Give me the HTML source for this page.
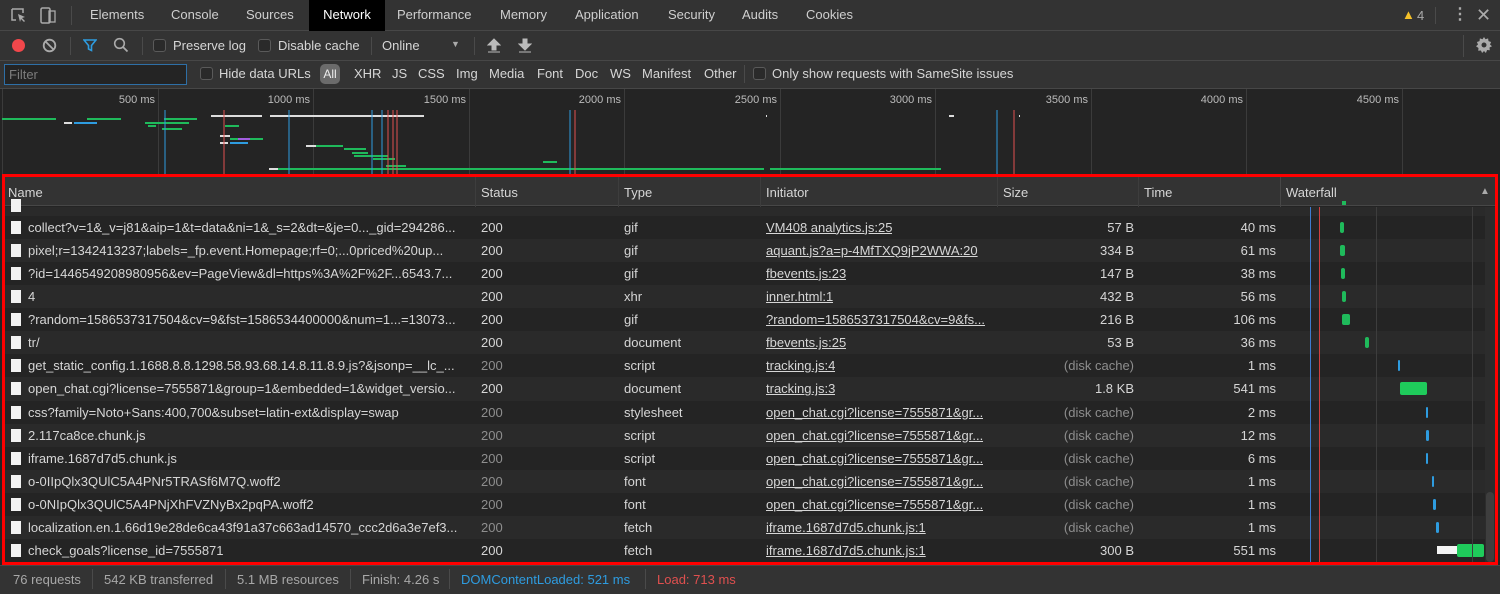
<!DOCTYPE html>
<html><head><meta charset="utf-8"><style>
*{box-sizing:border-box;margin:0;padding:0}
body{width:1500px;height:594px;background:#242424;font-family:"Liberation Sans",sans-serif;font-size:13px;color:#d6d6d6;position:relative;overflow:hidden}
.a{position:absolute;white-space:nowrap}
.bar{position:absolute;left:0;width:1500px;background:#333;border-bottom:1px solid #474747}
.tab{position:absolute;top:0;height:30px;line-height:30px;color:#cfcfcf}
.cb{position:absolute;width:13px;height:13px;border:1px solid #5a5a5a;border-radius:3px;background:#2a2a2a}
.sep{position:absolute;width:1px;background:#4a4a4a}
#tbl{position:absolute;left:2px;top:174px;width:1496px;height:391px;border:3px solid #f00;overflow:hidden;background:#242424}
.row{position:absolute;left:0;width:1490px;height:23.13px;line-height:23px}
.row span{position:absolute;white-space:nowrap;overflow:hidden}
.ic{position:absolute;left:6px;top:5px;width:10px;height:13px;background:#f2f2f2}
.u{text-decoration:underline;color:#d6d6d6}
.g{color:#8e8e8e}
.vl{position:absolute;width:1px;top:0;bottom:0;background:#3d3d3d}
</style></head><body>
<div class="bar" style="top:0;height:31px;background:#333"></div>
<svg class="a" style="left:10px;top:7px" width="48" height="18" viewBox="0 0 48 18"><path d="M2 2h11v4M2 2v11h4" stroke="#aaa" fill="none" stroke-width="1.5"/><path d="M8 7l7 3-3 1 3 3-1 1-3-3-1 3z" fill="#aaa"/><rect x="31" y="1" width="9" height="15" rx="1.5" stroke="#aaa" fill="none" stroke-width="1.5"/><rect x="39" y="4" width="6" height="11" stroke="#aaa" fill="none" stroke-width="1.3"/></svg>
<div class="sep" style="left:71px;top:6px;height:19px"></div>
<div class="tab" style="left:90px">Elements</div>
<div class="tab" style="left:171px">Console</div>
<div class="tab" style="left:246px">Sources</div>
<div class="tab" style="left:309px;width:76px;background:#000;color:#fff;text-align:center;height:31px">Network</div>
<div class="tab" style="left:397px">Performance</div>
<div class="tab" style="left:500px">Memory</div>
<div class="tab" style="left:575px">Application</div>
<div class="tab" style="left:668px">Security</div>
<div class="tab" style="left:742px">Audits</div>
<div class="tab" style="left:806px">Cookies</div>
<div class="a" style="left:1402px;top:7px;color:#f4c029;font-size:13px">▲</div>
<div class="a" style="left:1417px;top:8px;color:#aaa">4</div>
<div class="sep" style="left:1435px;top:7px;height:17px"></div>
<div class="a" style="left:1452px;top:6px;color:#aaa;font-size:16px;line-height:18px;font-weight:bold">⋮</div>
<div class="a" style="left:1476px;top:5px;color:#aaa;font-size:18px">✕</div>
<div class="bar" style="top:31px;height:30px"></div>
<div class="a" style="left:12px;top:39px;width:13px;height:13px;border-radius:50%;background:#f2474b"></div>
<svg class="a" style="left:42px;top:38px" width="15" height="15"><circle cx="7.5" cy="7.5" r="5.8" stroke="#aaa" stroke-width="1.8" fill="none"/><path d="M3.5 3.5l8 8" stroke="#aaa" stroke-width="1.8"/></svg>
<div class="sep" style="left:70px;top:37px;height:18px"></div>
<svg class="a" style="left:83px;top:39px" width="14" height="13"><path d="M1 1h12l-4.5 5.5v5l-3-1.5v-3.5z" stroke="#2e9ce0" stroke-width="1.6" fill="none"/></svg>
<svg class="a" style="left:113px;top:37px" width="16" height="16"><circle cx="6.5" cy="6.5" r="4.8" stroke="#aaa" stroke-width="1.6" fill="none"/><path d="M10 10l4.5 4.5" stroke="#aaa" stroke-width="1.8"/></svg>
<div class="sep" style="left:142px;top:37px;height:18px"></div>
<div class="cb" style="left:153px;top:39px"></div><div class="a" style="left:173px;top:38px">Preserve log</div>
<div class="cb" style="left:258px;top:39px"></div><div class="a" style="left:278px;top:38px">Disable cache</div>
<div class="sep" style="left:371px;top:37px;height:18px"></div>
<div class="a" style="left:382px;top:38px">Online</div>
<div class="a" style="left:451px;top:39px;color:#aaa;font-size:9px">▼</div>
<div class="sep" style="left:474px;top:37px;height:18px"></div>
<svg class="a" style="left:487px;top:38px" width="14" height="16"><path d="M7 1l6 6H9v5H5V7H1z M1 14h12" stroke="#bbb" fill="#bbb" stroke-width="1"/></svg>
<svg class="a" style="left:518px;top:38px" width="14" height="16"><path d="M5 1h4v5h4l-6 6-6-6h4z M1 14h12" stroke="#bbb" fill="#bbb" stroke-width="1"/></svg>
<div class="sep" style="left:1463px;top:35px;height:22px"></div>
<svg class="a" style="left:1476px;top:37px" width="16" height="16" viewBox="0 0 16 16"><path d="M8 0l1.5 2.2 2.6-.8.4 2.7 2.6.9-1.1 2.5L16 9.3l-2.5 1.2.3 2.7-2.7-.2L9.9 16 8 14l-1.9 2-1.2-2.5-2.7.2.3-2.7L0 9.3l2-1.8L.9 5l2.6-.9.4-2.7 2.6.8z" fill="#aaa"/><circle cx="8" cy="8" r="2.5" fill="#333"/></svg>
<div class="bar" style="top:61px;height:28px"></div>
<div class="a" style="left:4px;top:64px;width:183px;height:21px;border:1px solid #2e6fa6;background:#242424;color:#7c7c7c;padding:2px 4px">Filter</div>
<div class="cb" style="left:200px;top:67px"></div><div class="a" style="left:219px;top:66px">Hide data URLs</div>
<div class="a" style="left:320px;top:64px;width:20px;height:20px;border-radius:5px;background:#6b6b6b;color:#eee;text-align:center;line-height:20px;font-size:12px">All</div>
<div class="a" style="left:354px;top:66px">XHR</div>
<div class="a" style="left:392px;top:66px">JS</div>
<div class="a" style="left:418px;top:66px">CSS</div>
<div class="a" style="left:456px;top:66px">Img</div>
<div class="a" style="left:489px;top:66px">Media</div>
<div class="a" style="left:537px;top:66px">Font</div>
<div class="a" style="left:575px;top:66px">Doc</div>
<div class="a" style="left:610px;top:66px">WS</div>
<div class="a" style="left:642px;top:66px">Manifest</div>
<div class="a" style="left:704px;top:66px">Other</div>
<div class="sep" style="left:744px;top:65px;height:18px"></div>
<div class="cb" style="left:753px;top:67px"></div><div class="a" style="left:772px;top:66px">Only show requests with SameSite issues</div>
<svg class="a" style="left:0;top:89px" width="1500" height="86" viewBox="0 89 1500 86">
<rect x="0" y="89" width="1500" height="86" fill="#242424"/>
<g stroke="#3b3b3b" stroke-width="1"><path d="M158.5 89v86M313.5 89v86M469.5 89v86M624.5 89v86M780.5 89v86M935.5 89v86M1091.5 89v86M1246.5 89v86M1402.5 89v86M2.5 89v86"/></g>
<g fill="#bcbcbc" font-size="11" font-family="Liberation Sans" text-anchor="end"><text x="155" y="103">500 ms</text><text x="310" y="103">1000 ms</text><text x="466" y="103">1500 ms</text><text x="621" y="103">2000 ms</text><text x="777" y="103">2500 ms</text><text x="932" y="103">3000 ms</text><text x="1088" y="103">3500 ms</text><text x="1243" y="103">4000 ms</text><text x="1399" y="103">4500 ms</text></g>
<g stroke="#1fba5b" stroke-width="2">
<path d="M2 119h54M87 119h34M145 123h44M164 119h33M148 126h8M162 129h20M225 126h14M230 139h33M306 146h37M344 149h22M352 153h16M354 156h34M373 159h22M386 166h20M543 162h14M269 169h495M770 169h171"/></g>
<g stroke="#ddd" stroke-width="2"><path d="M211 116h51M270 116h154M64 123h8M220 136h10M220 143h8M306 146h10M269 169h9M766 116h1M949 116h5M1019 116h1"/></g>
<g stroke="#2e9ce0" stroke-width="2"><path d="M74 123h23M230 143h18"/></g>
<path d="M238 139h12" stroke="#a25ee0" stroke-width="2"/>
<g stroke="#2e9ce0" stroke-width="1"><path d="M165 110v65M289 110v65M372 110v65M382 110v65M570 110v65M997 110v65"/></g>
<g stroke="#e0504f" stroke-width="1"><path d="M224 110v65M388 110v65M393 110v65M397 110v65M575 110v65M1014 110v65"/></g>
</svg>
<div id="tbl">
<div class="a" style="left:0;top:0;width:1490px;height:29px;background:#333;border-bottom:1px solid #474747"></div>
<div class="vl" style="left:470px"></div><div class="vl" style="left:613px"></div><div class="vl" style="left:755px"></div><div class="vl" style="left:992px"></div><div class="vl" style="left:1133px"></div><div class="vl" style="left:1275px;background:#474747"></div>
<div class="a" style="left:3px;top:8px">Name</div><div class="a" style="left:476px;top:8px">Status</div><div class="a" style="left:619px;top:8px">Type</div><div class="a" style="left:761px;top:8px">Initiator</div><div class="a" style="left:998px;top:8px">Size</div><div class="a" style="left:1139px;top:8px">Time</div><div class="a" style="left:1281px;top:8px">Waterfall</div>
<div class="a" style="left:1475px;top:9px;color:#aaa;font-size:10px">▲</div>
<div id="rows"></div>
<div class="vl" style="left:1305px;top:30px;background:#3d7bd0"></div>
<div class="vl" style="left:1314px;top:30px;background:#d04040"></div>
<div class="vl" style="left:1371px;top:30px"></div>
<div class="vl" style="left:1467px;top:30px"></div>
<div class="a" style="left:1480px;top:30px;width:10px;height:360px;background:#2c2c2c"></div>
<div class="a" style="left:1481px;top:315px;width:8px;height:70px;background:#3e3e3e;border-radius:4px"></div>
</div>
<div class="a" style="left:0;top:565px;width:1500px;height:29px;background:#333;border-top:1px solid #474747"></div>
<div class="a" style="left:13px;top:572px;color:#a8a8a8">76 requests</div><div class="sep" style="left:92px;top:569px;height:20px"></div>
<div class="a" style="left:104px;top:572px;color:#a8a8a8">542 KB transferred</div><div class="sep" style="left:225px;top:569px;height:20px"></div>
<div class="a" style="left:237px;top:572px;color:#a8a8a8">5.1 MB resources</div><div class="sep" style="left:350px;top:569px;height:20px"></div>
<div class="a" style="left:362px;top:572px;color:#a8a8a8">Finish: 4.26 s</div><div class="sep" style="left:449px;top:569px;height:20px"></div>
<div class="a" style="left:461px;top:572px;color:#2e9ce0">DOMContentLoaded: 521 ms</div><div class="sep" style="left:645px;top:569px;height:20px"></div>
<div class="a" style="left:657px;top:572px;color:#e0504f">Load: 713 ms</div>
<script>
var R=[
["collect?v=1&_v=j81&aip=1&t=data&ni=1&_s=2&dt=&je=0..._gid=294286...","200","gif","VM408 analytics.js:25","57 B","40 ms",[1340,4,"#1fba5b"]],
["pixel;r=1342413237;labels=_fp.event.Homepage;rf=0;...0priced%20up...","200","gif","aquant.js?a=p-4MfTXQ9jP2WWA:20","334 B","61 ms",[1340,5,"#1fba5b"]],
["?id=1446549208980956&ev=PageView&dl=https%3A%2F%2F...6543.7...","200","gif","fbevents.js:23","147 B","38 ms",[1341,4,"#1fba5b"]],
["4","200","xhr","inner.html:1","432 B","56 ms",[1342,4,"#1fba5b"]],
["?random=1586537317504&cv=9&fst=1586534400000&num=1...=13073...","200","gif","?random=1586537317504&cv=9&fs...","216 B","106 ms",[1342,8,"#1fba5b"]],
["tr/","200","document","fbevents.js:25","53 B","36 ms",[1365,4,"#1fba5b"]],
["get_static_config.1.1688.8.8.1298.58.93.68.14.8.11.8.9.js?&jsonp=__lc_...","200g","script","tracking.js:4","(disk cache)","1 ms",[1398,2,"#2e9ce0"]],
["open_chat.cgi?license=7555871&group=1&embedded=1&widget_versio...","200","document","tracking.js:3","1.8 KB","541 ms",[1400,27,"#1fcb5b"]],
["css?family=Noto+Sans:400,700&subset=latin-ext&display=swap","200g","stylesheet","open_chat.cgi?license=7555871&gr...","(disk cache)","2 ms",[1426,2,"#2e9ce0"]],
["2.117ca8ce.chunk.js","200g","script","open_chat.cgi?license=7555871&gr...","(disk cache)","12 ms",[1426,3,"#2e9ce0"]],
["iframe.1687d7d5.chunk.js","200g","script","open_chat.cgi?license=7555871&gr...","(disk cache)","6 ms",[1426,2,"#2e9ce0"]],
["o-0IIpQlx3QUlC5A4PNr5TRASf6M7Q.woff2","200g","font","open_chat.cgi?license=7555871&gr...","(disk cache)","1 ms",[1432,2,"#2e9ce0"]],
["o-0NIpQlx3QUlC5A4PNjXhFVZNyBx2pqPA.woff2","200g","font","open_chat.cgi?license=7555871&gr...","(disk cache)","1 ms",[1433,3,"#2e9ce0"]],
["localization.en.1.66d19e28de6ca43f91a37c663ad14570_ccc2d6a3e7ef3...","200g","fetch","iframe.1687d7d5.chunk.js:1","(disk cache)","1 ms",[1436,3,"#2e9ce0"]],
["check_goals?license_id=7555871","200","fetch","iframe.1687d7d5.chunk.js:1","300 B","551 ms",[1457,27,"#1fcb5b"]]];
var h='<div class="row" style="top:30px;height:9px;background:#2a2a2a"><div class="ic" style="top:-8px"></div><span style="left:1337px;top:-6px;width:4px;height:4px;background:#1fba5b"></span></div>';
for(var i=0;i<R.length;i++){var r=R[i],t=38.5+i*23.13,bg=i%2?'#2a2a2a':'#242424';
var st=r[1].replace('g',''),gs=r[1].indexOf('g')>0?' g':'';var sz=r[4][0]=='('?' g':'';
h+='<div class="row" style="top:'+t+'px;background:'+bg+'"><div class="ic"></div>'+
'<span style="left:23px;width:445px">'+r[0].replace(/&/g,'&amp;')+'</span>'+
'<span class="'+gs+'" style="left:476px">'+st+'</span>'+
'<span style="left:619px">'+r[2]+'</span>'+
'<span class="u" style="left:761px">'+r[3].replace(/&/g,'&amp;')+'</span>'+
'<span class="'+sz+'" style="left:993px;width:136px;text-align:right">'+r[4]+'</span>'+
'<span style="left:1134px;width:137px;text-align:right">'+r[5]+'</span>'+
(i==14?'<span style="left:1432px;top:7px;width:22px;height:8px;background:#f4f4f4"></span>':'')+
'<span style="left:'+(r[6][0]-5)+'px;top:'+(r[6][1]>10?5:6)+'px;width:'+r[6][1]+'px;height:'+(r[6][1]>10?13:11)+'px;background:'+r[6][2]+';border-radius:2px"></span></div>';}
document.getElementById('rows').innerHTML=h;
</script>
</body></html>
